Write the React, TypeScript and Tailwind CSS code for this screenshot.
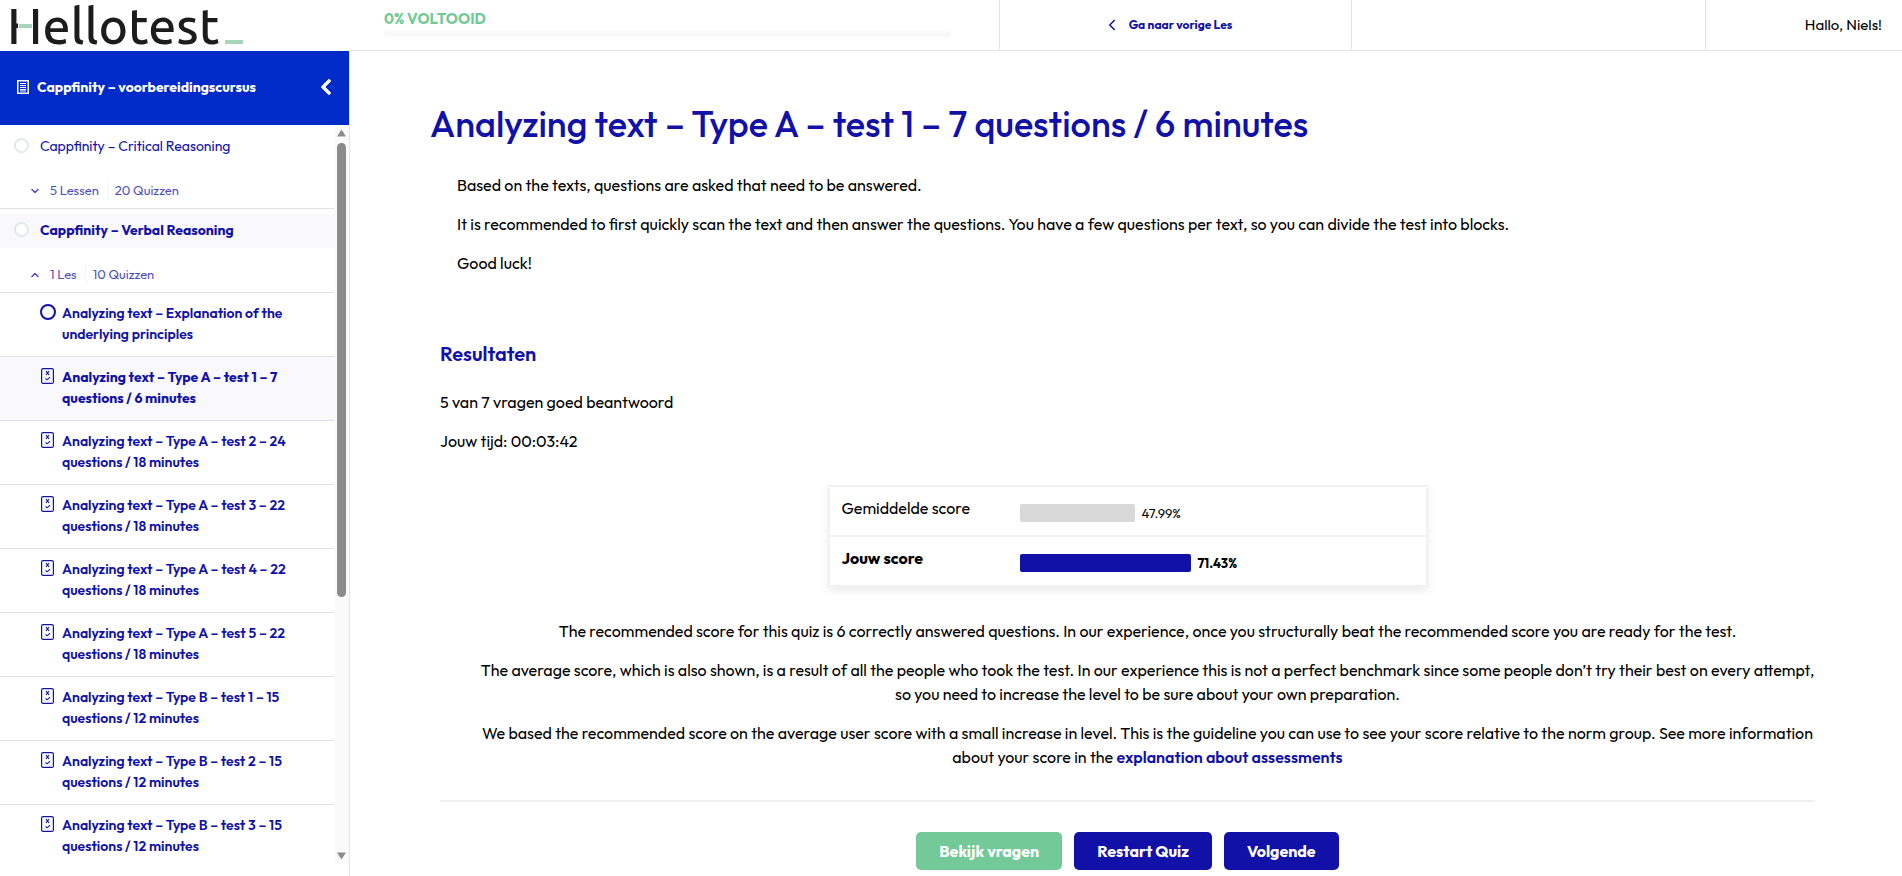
import React from "react";
import { ChevronDown, ChevronLeft, ChevronUp } from "lucide-react";
import { FaChevronLeft } from "react-icons/fa";

type Step = {
    title: string;
    kind: "lesson" | "quiz";
    active?: boolean;
};

type Section = {
    title: string;
    lessons: string;
    quizzes: string;
    open: boolean;
    steps: Step[];
};

type Score = {
    label: string;
    value: number;
    own: boolean;
};

const sections: Section[] = [
    {
        title: "Cappfinity – Critical Reasoning",
        lessons: "5 Lessen",
        quizzes: "20 Quizzen",
        open: false,
        steps: [],
    },
    {
        title: "Cappfinity – Verbal Reasoning",
        lessons: "1 Les",
        quizzes: "10 Quizzen",
        open: true,
        steps: [
            { title: "Analyzing text – Explanation of the underlying principles", kind: "lesson" },
            { title: "Analyzing text – Type A – test 1 – 7 questions / 6 minutes", kind: "quiz", active: true },
            { title: "Analyzing text – Type A – test 2 – 24 questions / 18 minutes", kind: "quiz" },
            { title: "Analyzing text – Type A – test 3 – 22 questions / 18 minutes", kind: "quiz" },
            { title: "Analyzing text – Type A – test 4 – 22 questions / 18 minutes", kind: "quiz" },
            { title: "Analyzing text – Type A – test 5 – 22 questions / 18 minutes", kind: "quiz" },
            { title: "Analyzing text – Type B – test 1 – 15 questions / 12 minutes", kind: "quiz" },
            { title: "Analyzing text – Type B – test 2 – 15 questions / 12 minutes", kind: "quiz" },
            { title: "Analyzing text – Type B – test 3 – 15 questions / 12 minutes", kind: "quiz" },
        ],
    },
];

const scores: Score[] = [
    { label: "Gemiddelde score", value: 47.99, own: false },
    { label: "Jouw score", value: 71.43, own: true },
];

function Logo() {
    return (
        <svg width="250" height="50" viewBox="0 0 250 50" role="img" aria-label="Hellotest">
            <text x="7" y="44" className="fill-[#1c1c1c] font-['Ubuntu','Open_Sans',sans-serif] text-[50px] font-medium">
                Hellotest
            </text>
            {/* green dash instead of the crossbar of the H */}
            <rect x="18" y="20" width="15" height="14" fill="#ffffff" />
            <rect x="19" y="24" width="13" height="4" fill="#a5d6b9" />
            <rect x="225" y="40" width="18" height="4" fill="#a5d6b9" />
        </svg>
    );
}

function CourseIcon() {
    return (
        <svg width="12" height="14" viewBox="0 0 12 14" fill="none" stroke="currentColor" className="shrink-0">
            <rect x="0.75" y="0.75" width="10.5" height="12.5" strokeWidth="1.5" />
            <path d="M3 3.5h6M3 5.5h6M3 7.5h6M3 9.5h6M3 11h6" strokeWidth="1" />
        </svg>
    );
}

function QuizIcon() {
    return (
        <svg width="13" height="16" viewBox="0 0 13 16" fill="none" stroke="currentColor" className="shrink-0">
            <rect x="0.6" y="0.6" width="11.8" height="14.8" rx="1.5" strokeWidth="1.2" />
            <path d="M5 3.2l3 3.6M8 3.2l-3 3.6" strokeWidth="1.1" />
            <path d="M4.5 10.4l1.6 1.4 3-2.6" strokeWidth="1.1" />
        </svg>
    );
}

function StepLink({ step }: { step: Step }) {
    return (
        <a
            href="#"
            className={`flex items-start border-b border-[#dfe2ea] pt-[10px] pr-4 pb-[11px] text-sm leading-[21px] ${
                step.active ? "bg-[#f9f9fc] font-bold" : "font-semibold"
            }`}
        >
            <span className="flex w-[62px] shrink-0 pt-px pl-10">
                {step.kind === "lesson" ? (
                    <span className="size-4 rounded-full border-2 border-[#1111a8]" />
                ) : (
                    <span className="pl-px">
                        <QuizIcon />
                    </span>
                )}
            </span>
            <span>{step.title}</span>
        </a>
    );
}

function Sidebar() {
    return (
        <aside className="sticky top-0 flex h-screen w-[350px] shrink-0 flex-col text-[#1111a8]">
            <a href="#" className="h-[51px] shrink-0">
                <Logo />
            </a>

            <div className="flex min-h-0 flex-1 flex-col border-r border-[#e2e4e9]">
                <div className="flex h-[74px] shrink-0 items-center bg-[#002bc8] pr-[14px] pb-0.5 pl-[17px] text-white">
                    <CourseIcon />
                    <a href="#" className="ml-2 flex-1 text-sm font-bold">
                        Cappfinity – voorbereidingscursus
                    </a>
                    <button type="button" aria-label="Inklappen">
                        <FaChevronLeft className="size-[18px]" stroke="currentColor" strokeWidth={24} />
                    </button>
                </div>

                <div className="mb-3 flex min-h-0 flex-1">
                    <nav className="flex-1 overflow-y-auto [scrollbar-width:none]">
                        {sections.map((section) => (
                            <div key={section.title}>
                                <div className="border-b border-[#dfe2ea] pt-[5px]">
                                    <a
                                        href="#"
                                        className={`flex h-[34px] items-center gap-[11px] pb-[3px] pl-[14px] text-sm ${
                                            section.open ? "bg-[#f9f9fc] font-bold" : ""
                                        }`}
                                    >
                                        <span className="size-[15px] rounded-full border-2 border-[#e2e7ed] bg-white" />
                                        {section.title}
                                    </a>
                                    <button
                                        type="button"
                                        className="flex h-11 w-full items-center pt-[9px] pl-[29px] text-[13px] opacity-75"
                                    >
                                        {section.open ? (
                                            <ChevronUp className="size-3" strokeWidth={3} />
                                        ) : (
                                            <ChevronDown className="size-3" strokeWidth={3} />
                                        )}
                                        <span className="ml-[9px] border-r border-[#f1f3f6] pr-2">
                                            {section.lessons}
                                        </span>
                                        <span className="pl-[7px]">{section.quizzes}</span>
                                    </button>
                                </div>
                                {section.steps.map((step) => (
                                    <StepLink key={step.title} step={step} />
                                ))}
                            </div>
                        ))}
                    </nav>

                    {/* Scrollbar */}
                    <div className="flex w-[15px] flex-col items-center bg-[#fafafa] py-1 pr-px text-[#8b8b8b]">
                        <svg width="9" height="8" viewBox="0 0 9 8" fill="currentColor">
                            <path d="M4.5 0.5L9 7.5H0z" />
                        </svg>
                        <div className="mt-[6px] mb-[10px] flex w-[9px] flex-1 flex-col">
                            <div className="h-[65%] rounded-full bg-[#8b8b8b]" />
                        </div>
                        <svg width="9" height="8" viewBox="0 0 9 8" fill="currentColor">
                            <path d="M4.5 7.5L9 0.5H0z" />
                        </svg>
                    </div>
                </div>
            </div>
        </aside>
    );
}

function TopBar() {
    return (
        <header className="grid h-[51px] grid-cols-[650fr_352fr_354fr_196fr] border-b border-[#e2e4e9]">
            <div className="border-r border-[#e2e4e9] pt-2 pr-12 pl-[34px]">
                <div className="text-[15px] leading-[22px] font-bold text-[#72c997]">0% VOLTOOID</div>
                <div className="mt-px h-[6px] rounded-full bg-[#f9f9f9]" />
            </div>
            <div className="flex items-center justify-center border-r border-[#e2e4e9] pr-4">
                <a href="#" className="flex items-center gap-2 text-xs font-bold text-[#1111a8]">
                    <ChevronLeft className="size-[18px]" />
                    Ga naar vorige Les
                </a>
            </div>
            <div className="border-r border-[#e2e4e9]" />
            <div className="flex items-center justify-end pr-5 text-[15px]">Hallo, Niels!</div>
        </header>
    );
}

function ScoreTable() {
    return (
        <table className="mx-auto mt-8 w-[600px] border-collapse border-2 border-[#f1f1f1] shadow-[0_4px_8px_rgba(0,0,0,0.08)]">
            <tbody>
                {scores.map((score) => (
                    <tr key={score.label} className="h-[50px] border-2 border-[#f1f1f1]">
                        <th
                            scope="row"
                            className={`w-[191px] pt-[9px] pl-3 text-left align-top ${
                                score.own ? "font-bold" : "font-normal"
                            }`}
                        >
                            {score.label}
                        </th>
                        <td className={`pt-[17px] align-top ${score.own ? "font-bold" : "font-normal"}`}>
                            <div className="flex h-[18px] items-center gap-[7px] text-[13px] leading-[18px]">
                                <div
                                    className={`h-[18px] rounded-xs ${score.own ? "bg-[#1111a8]" : "bg-[#d8d8d8]"}`}
                                    style={{ width: Math.round(score.value * 2.4) }}
                                />
                                {score.value}%
                            </div>
                        </td>
                    </tr>
                ))}
            </tbody>
        </table>
    );
}

function ActionButton({ children, green = false }: { children: React.ReactNode; green?: boolean }) {
    return (
        <button
            type="button"
            className={`h-[38px] rounded-[5px] px-[23px] font-bold text-white ${
                green ? "bg-[#73c998]" : "bg-[#1111a8]"
            }`}
        >
            {children}
        </button>
    );
}

export default function App() {
    return (
        <div className="flex min-h-screen bg-white font-['Outfit','Lato',sans-serif] text-base text-black">
            <Sidebar />

            <div className="min-w-0 flex-1">
                <TopBar />

                <main className="pt-[50px] pr-[87px] pb-[6px] pl-20">
                    <h1 className="text-4xl leading-[46px] font-medium text-[#1111a8]">
                        Analyzing text – Type A – test 1 – 7 questions / 6 minutes
                    </h1>

                    <div className="mt-[26px] flex flex-col gap-[15px] pl-[27px]">
                        <p>Based on the texts, questions are asked that need to be answered.</p>
                        <p>
                            It is recommended to first quickly scan the text and then answer the questions. You have a
                            few questions per text, so you can divide the test into blocks.
                        </p>
                        <p>Good luck!</p>
                    </div>

                    {/* Results */}
                    <section className="mt-[65px] pl-[10px]">
                        <h2 className="text-xl leading-[28px] font-semibold text-[#1111a8]">Resultaten</h2>
                        <div className="mt-[22px] flex flex-col gap-[15px]">
                            <p>5 van 7 vragen goed beantwoord</p>
                            <p>Jouw tijd: 00:03:42</p>
                        </div>

                        <ScoreTable />

                        <div className="mt-8 flex flex-col gap-[15px] pl-10 text-center">
                            <p>
                                The recommended score for this quiz is 6 correctly answered questions. In our
                                experience, once you structurally beat the recommended score you are ready for the test.
                            </p>
                            <p>
                                The average score, which is also shown, is a result of all the people who took the test.
                                In our experience this is not a perfect benchmark since some people don’t try their best
                                on every attempt, so you need to increase the level to be sure about your own
                                preparation.
                            </p>
                            <p>
                                We based the recommended score on the average user score with a small increase in level.
                                This is the guideline you can use to see your score relative to the norm group. See more
                                information about your score in the{" "}
                                <a href="#" className="font-semibold text-[#1111a8]">
                                    explanation about assessments
                                </a>
                            </p>
                        </div>

                        <hr className="mt-[31px] border-t-2 border-[#efefef]" />

                        <div className="mt-[30px] flex justify-center gap-3">
                            <ActionButton green>Bekijk vragen</ActionButton>
                            <ActionButton>Restart Quiz</ActionButton>
                            <ActionButton>Volgende</ActionButton>
                        </div>
                    </section>
                </main>
            </div>
        </div>
    );
}
